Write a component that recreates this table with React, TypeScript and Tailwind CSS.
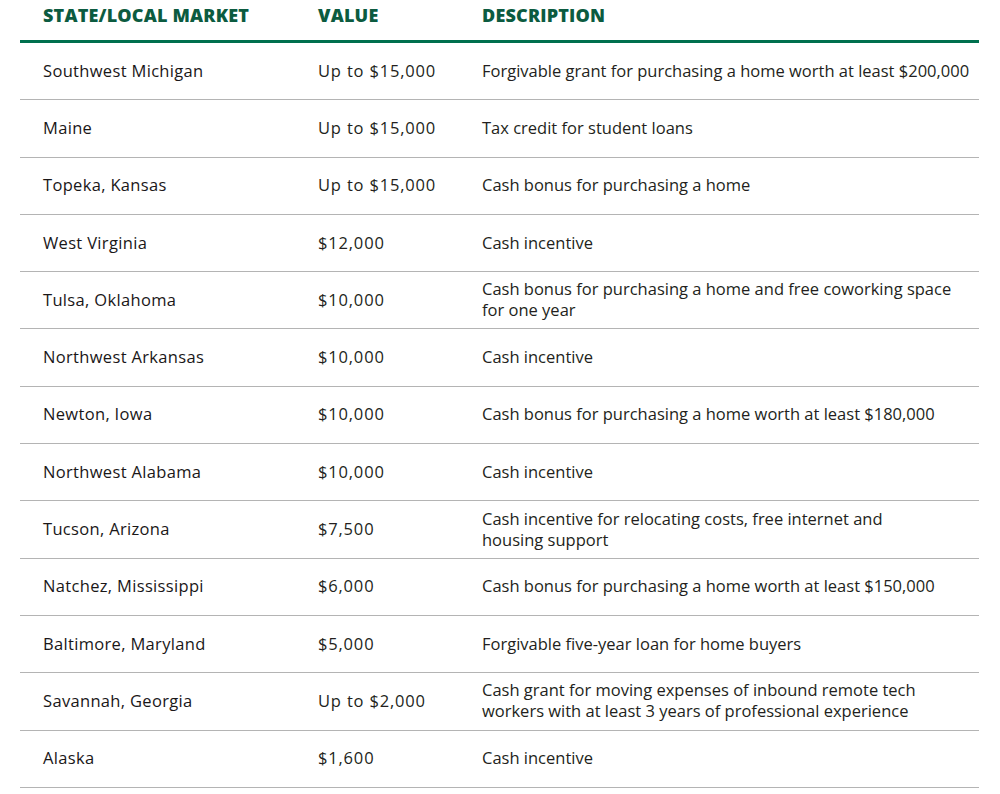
const rows: [string, string, string[]][] = [
  ['Southwest Michigan', 'Up to $15,000', ['Forgivable grant for purchasing a home worth at least $200,000']],
  ['Maine', 'Up to $15,000', ['Tax credit for student loans']],
  ['Topeka, Kansas', 'Up to $15,000', ['Cash bonus for purchasing a home']],
  ['West Virginia', '$12,000', ['Cash incentive']],
  ['Tulsa, Oklahoma', '$10,000', ['Cash bonus for purchasing a home and free coworking space', 'for one year']],
  ['Northwest Arkansas', '$10,000', ['Cash incentive']],
  ['Newton, Iowa', '$10,000', ['Cash bonus for purchasing a home worth at least $180,000']],
  ['Northwest Alabama', '$10,000', ['Cash incentive']],
  ['Tucson, Arizona', '$7,500', ['Cash incentive for relocating costs, free internet and', 'housing support']],
  ['Natchez, Mississippi', '$6,000', ['Cash bonus for purchasing a home worth at least $150,000']],
  ['Baltimore, Maryland', '$5,000', ['Forgivable five-year loan for home buyers']],
  ['Savannah, Georgia', 'Up to $2,000', ['Cash grant for moving expenses of inbound remote tech', 'workers with at least 3 years of professional experience']],
  ['Alaska', '$1,600', ['Cash incentive']],
];

export default function App() {
  return (
    <div className="min-h-[794px] bg-white pl-5 pr-[21px] text-[#231f20] [font-family:'Open_Sans',sans-serif]">
      <div className="grid h-[40px] grid-cols-[275px_164px_1fr] items-center text-[18px] font-extrabold uppercase tracking-[0.01em] text-[#0c5b40]">
        <div className="pl-[23px] pb-[10px]">State/Local Market</div>
        <div className="pl-[23px] pb-[10px]">Value</div>
        <div className="pl-[23px] pb-[10px]">Description</div>
      </div>
      <div className="h-[3px] bg-[#00704e]" />
      {rows.map(([market, value, desc]) => (
        <div
          key={market}
          className="grid h-[57.3px] grid-cols-[275px_164px_1fr] items-center border-b-[1.5px] border-[#b4b4b4] pb-[2px] text-[16.5px] leading-[21px]"
        >
          <div className="pl-[23px] font-medium tracking-[0.02em] text-[#1a1718]">{market}</div>
          <div className="pl-[23px] tracking-[0.05em]">{value}</div>
          <div className="pl-[23px]">
            {desc.map((line) => (
              <div key={line} className="whitespace-nowrap">{line}</div>
            ))}
          </div>
        </div>
      ))}
    </div>
  );
}
